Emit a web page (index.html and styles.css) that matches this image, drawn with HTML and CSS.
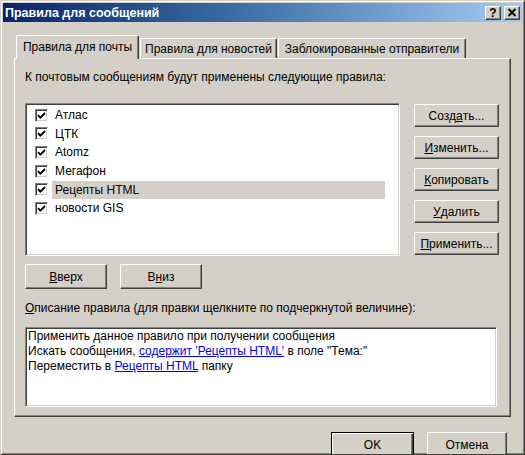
FILE: index.html
```html
<!DOCTYPE html>
<html lang="ru">
<head>
<meta charset="utf-8">
<title>Правила для сообщений</title>
<link rel="stylesheet" href="styles.css">
</head>
<body>
<div class="window">
  <div class="titlebar">
    <span class="title">Правила для сообщений</span>
    <div class="tb-buttons">
      <span class="tb-btn">?</span>
      <span class="tb-btn">
        <svg width="10" height="9" viewBox="0 0 10 9"><path d="M1.5 1 L8.5 8 M8.5 1 L1.5 8" stroke="#000" stroke-width="2"/></svg>
      </span>
    </div>
  </div>
  <div class="tabs">
    <div class="tab active">Правила для почты</div>
    <div class="tab t2">Правила для новостей</div>
    <div class="tab t3">Заблокированные отправители</div>
  </div>
  <div class="panel">
    <div class="label">К почтовым сообщениям будут применены следующие правила:</div>
    <div class="list-row">
      <div class="listbox">
        <div class="item"><span class="cb"><svg width="9" height="9" viewBox="0 0 9 9"><path d="M1 4.2 L3.4 6.6 L8 2" fill="none" stroke="#000" stroke-width="1.9"/></svg></span><span class="txt">Атлас</span></div>
        <div class="item"><span class="cb"><svg width="9" height="9" viewBox="0 0 9 9"><path d="M1 4.2 L3.4 6.6 L8 2" fill="none" stroke="#000" stroke-width="1.9"/></svg></span><span class="txt">ЦТК</span></div>
        <div class="item"><span class="cb"><svg width="9" height="9" viewBox="0 0 9 9"><path d="M1 4.2 L3.4 6.6 L8 2" fill="none" stroke="#000" stroke-width="1.9"/></svg></span><span class="txt">Atomz</span></div>
        <div class="item"><span class="cb"><svg width="9" height="9" viewBox="0 0 9 9"><path d="M1 4.2 L3.4 6.6 L8 2" fill="none" stroke="#000" stroke-width="1.9"/></svg></span><span class="txt">Мегафон</span></div>
        <div class="item"><span class="cb"><svg width="9" height="9" viewBox="0 0 9 9"><path d="M1 4.2 L3.4 6.6 L8 2" fill="none" stroke="#000" stroke-width="1.9"/></svg></span><span class="txt sel">Рецепты HTML</span></div>
        <div class="item"><span class="cb"><svg width="9" height="9" viewBox="0 0 9 9"><path d="M1 4.2 L3.4 6.6 L8 2" fill="none" stroke="#000" stroke-width="1.9"/></svg></span><span class="txt">новости GIS</span></div>
      </div>
      <div class="side-buttons">
        <div class="btn">Созд<u>а</u>ть...</div>
        <div class="btn"><u>И</u>зменить...</div>
        <div class="btn"><u>К</u>опировать</div>
        <div class="btn"><u>У</u>далить</div>
        <div class="btn"><u>П</u>рименить...</div>
      </div>
    </div>
    <div class="move-buttons">
      <div class="btn mv"><u>В</u>верх</div>
      <div class="btn mv">В<u>н</u>из</div>
    </div>
    <div class="label desc-label"><u>О</u>писание правила (для правки щелкните по подчеркнутой величине):</div>
    <div class="descbox">
      <div>Применить данное правило при получении сообщения</div>
      <div>Искать сообщения, <a class="lnk">содержит 'Рецепты HTML'</a> в поле "Тема:"</div>
      <div>Переместить в <a class="lnk">Рецепты HTML</a> папку</div>
    </div>
  </div>
  <div class="footer">
    <div class="btn ok"><span>OK</span></div>
    <div class="btn cancel">Отмена</div>
  </div>
</div>
</body>
</html>
```
FILE: styles.css
```css
html, body {
  margin: 0;
  padding: 0;
  background: #d4d0c8;
}
body {
  font-family: "Liberation Sans", Arial, sans-serif;
  font-size: 12px;
  color: #000;
}
.window {
  width: 525px;
  height: 455px;
  box-sizing: border-box;
  border: 1px solid;
  border-color: #d4d0c8 #404040 #404040 #d4d0c8;
  box-shadow: inset 1px 1px #fff, inset -1px -1px #808080;
  padding: 2px;
  background: #d4d0c8;
  overflow: hidden;
}
.titlebar {
  height: 19px;
  background: linear-gradient(to right, #0a246a 0%, #3a6ea5 45%, #a6caf0 100%);
  display: flex;
  align-items: center;
  padding-left: 2px;
  color: #fff;
  font-weight: bold;
  font-size: 12.5px;
  white-space: nowrap;
}
.tb-buttons {
  margin-left: auto;
  display: flex;
  gap: 3px;
  padding-right: 2px;
}
.tb-btn {
  width: 16px;
  height: 14px;
  box-sizing: border-box;
  background: #d4d0c8;
  border: 1px solid;
  border-color: #fff #404040 #404040 #fff;
  box-shadow: inset -1px -1px #808080;
  color: #000;
  font-size: 12px;
  font-weight: bold;
  line-height: 12px;
  display: flex;
  align-items: center;
  justify-content: center;
}
.tabs {
  display: flex;
  align-items: flex-end;
  padding-left: 13px;
  margin-top: 13px;
  height: 23px;
  position: relative;
  z-index: 2;
}
.tab {
  height: 20px;
  box-sizing: border-box;
  border-top: 1px solid #fff;
  border-left: 1px solid #fff;
  border-right: 1px solid #404040;
  box-shadow: inset -1px 0 #808080;
  border-radius: 2px 2px 0 0;
  display: flex;
  align-items: center;
  justify-content: center;
  margin-left: 1px;
  white-space: nowrap;
}
.tab.active {
  width: 123px;
  height: 24px;
  margin-bottom: -1px;
  margin-left: 0;
  background: #d4d0c8;
  padding-bottom: 2px;
}
.tab.t2 { width: 137px; }
.tab.t3 { width: 188px; }
.panel {
  margin-left: 11px;
  width: 497px;
  height: 359px;
  box-sizing: border-box;
  border: 1px solid;
  border-color: #fff #404040 #404040 #fff;
  box-shadow: inset -1px -1px #808080;
  padding: 10px 0 0 10px;
}
.label {
  line-height: 16px;
  height: 16px;
  white-space: nowrap;
}
.list-row {
  display: flex;
  gap: 14px;
  margin-top: 18px;
}
.listbox {
  width: 375px;
  height: 153px;
  box-sizing: border-box;
  background: #fff;
  border: 1px solid;
  border-color: #808080 #fff #fff #808080;
  box-shadow: inset 1px 1px #404040, inset -1px -1px #d4d0c8;
  padding: 2px 0 0 9px;
}
.item {
  height: 18.6px;
  display: flex;
  align-items: center;
}
.cb {
  width: 13px;
  height: 13px;
  box-sizing: border-box;
  border: 1px solid;
  border-color: #808080 #fff #fff #808080;
  box-shadow: inset 1px 1px #404040, inset -1px -1px #d4d0c8;
  background: #fff;
  display: flex;
  align-items: center;
  justify-content: center;
  flex: none;
}
.txt {
  margin-left: 4px;
  padding-left: 3px;
  width: 330px;
  line-height: 18px;
}
.txt.sel {
  background: #d4d0c8;
}
.side-buttons {
  display: flex;
  flex-direction: column;
  gap: 9px;
  margin-top: 1px;
}
.btn {
  width: 85px;
  height: 23px;
  box-sizing: border-box;
  border: 1px solid;
  border-color: #fff #404040 #404040 #fff;
  box-shadow: inset -1px -1px #808080;
  background: #d4d0c8;
  display: flex;
  align-items: center;
  justify-content: center;
  white-space: nowrap;
}
.move-buttons {
  display: flex;
  gap: 13px;
  margin-top: 8px;
}
.btn.mv {
  width: 82px;
  height: 25px;
}
.desc-label {
  margin-top: 11px;
}
.descbox {
  margin-top: 11px;
  width: 472px;
  height: 80px;
  box-sizing: border-box;
  background: #fff;
  border: 1px solid;
  border-color: #808080 #fff #fff #808080;
  box-shadow: inset 1px 1px #404040, inset -1px -1px #d4d0c8;
  padding: 1px 0 0 2px;
  line-height: 15px;
}
.lnk {
  color: #0000ee;
  text-decoration: underline;
}
.footer {
  display: flex;
  justify-content: flex-end;
  gap: 13px;
  margin-top: 15px;
  padding-right: 15px;
}
.btn.ok {
  width: 83px;
  height: 25px;
  border: 1px solid #000;
  box-shadow: inset 1px 1px #fff, inset -1px -1px #404040, inset -2px -2px #808080;
}
.btn.cancel {
  width: 80px;
  height: 25px;
}
```
